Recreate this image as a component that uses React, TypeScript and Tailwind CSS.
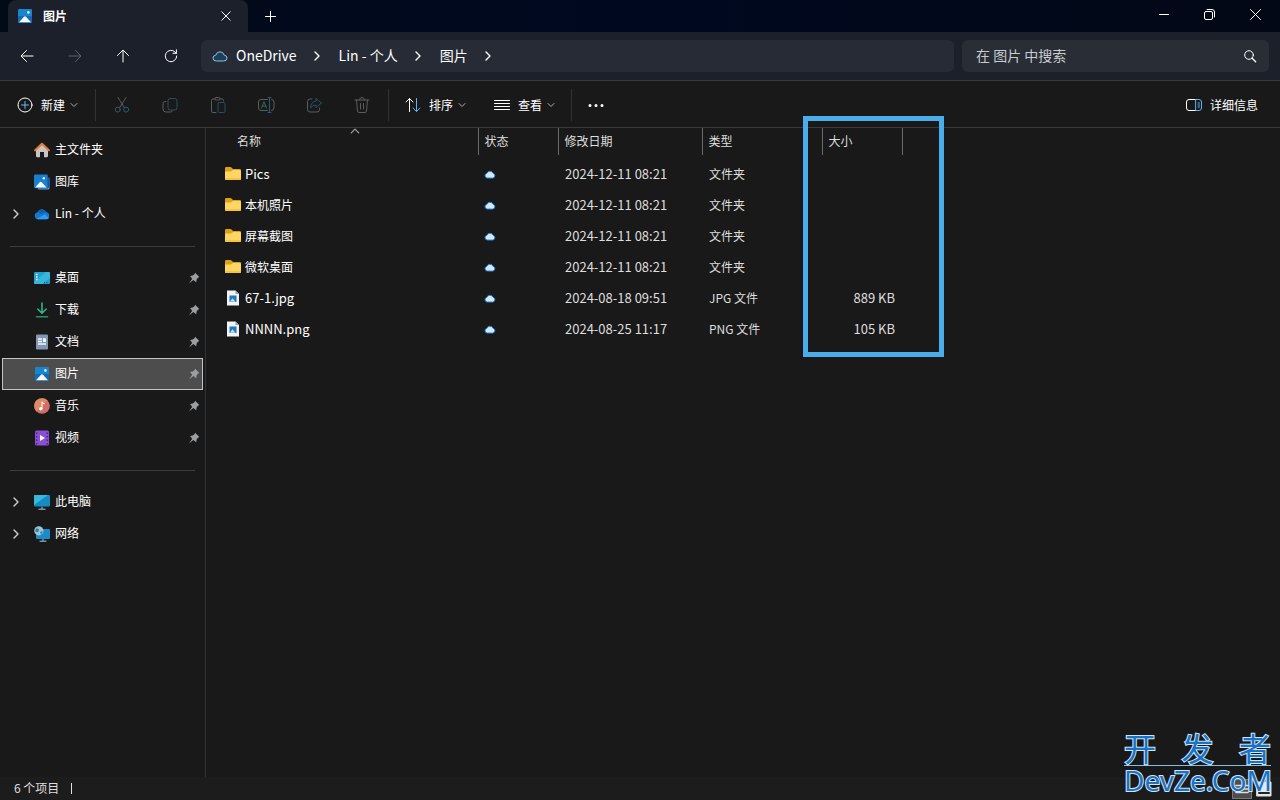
import { ReactNode } from "react";

type IconProps = { className?: string };

const Svg = ({
  children,
  className = "size-4",
  box = 16,
}: IconProps & { children: ReactNode; box?: number }) => (
  <svg
    viewBox={`0 0 ${box} ${box}`}
    className={`shrink-0 ${className}`}
    fill="none"
    stroke="currentColor"
    strokeLinecap="round"
    strokeLinejoin="round"
    aria-hidden="true"
  >
    {children}
  </svg>
);

const Chevron = ({ className = "size-2" }: IconProps) => (
  <Svg box={8} className={className}>
    <path d="M1 2.5 4 5.5 7 2.5" />
  </Svg>
);

const ChevronRight = ({ className = "size-4" }: IconProps) => (
  <Svg className={className}>
    <path d="M6 4l4 4-4 4" strokeWidth="1.4" />
  </Svg>
);

const PictureIcon = ({ className }: IconProps) => (
  <Svg className={className}>
    <rect x="1" y="1" width="14" height="14" rx="1.2" fill="#1b84cf" stroke="none" />
    <path d="M1 8h14v6q0 1-1 1H2q-1 0-1-1z" fill="#126bb5" stroke="none" />
    <path d="M2 14.2 7 8.8q1-1 2 0l5 5.4z" fill="#f3faff" stroke="none" />
    <circle cx="11.4" cy="4.4" r="1.3" fill="#d8f1ff" stroke="none" />
  </Svg>
);

const GalleryIcon = () => (
  <Svg>
    <path d="M4 14.2h9.5q1 0 1-1V4h1v10q0 1.5-1.5 1.5H4z" fill="#5d9fe0" stroke="none" />
    <path d="M14.5 3q1.2 0 1.2 1v9.5h-2z" fill="#1556a8" stroke="none" />
    <rect x="0" y="0.5" width="13.8" height="13.8" rx="1.2" fill="#1c7fcd" stroke="none" />
    <path d="M1.2 13.5 5.7 8.2q1-1 2 0l4.9 5.3z" fill="#f3faff" stroke="none" />
    <circle cx="9.8" cy="4.2" r="1.2" fill="#d8f1ff" stroke="none" />
  </Svg>
);

const HomeIcon = () => (
  <Svg>
    <path d="M2 7.5 8 2l6 5.5V14q0 1.3-1.3 1.3H10V10H6v5.3H3.3Q2 15.3 2 14z" fill="#c9c5c4" stroke="none" />
    <path d="M1.2 8.3 8 1.8l6.8 6.5" stroke="#e07c3c" strokeWidth="2.2" />
  </Svg>
);

const OneDriveIcon = () => (
  <Svg>
    <path d="M3.8 13.3a3.6 3.6 0 0 1-.5-7A5 5 0 0 1 12.3 6a3.8 3.8 0 0 1 .4 7.3z" fill="#1577cf" stroke="none" />
    <path d="M3.4 6.3A5 5 0 0 1 12.3 6q-3 .1-5 2.3Q5.8 6.5 3.4 6.3z" fill="#0f5fae" stroke="none" />
    <path d="M2.5 12.8 11 8.2l3.8 3.8q-.8 1.3-2.1 1.3H3.8z" fill="#2c9df0" stroke="none" />
  </Svg>
);

const DesktopIcon = () => (
  <Svg>
    <rect x="0" y="2" width="16" height="12" rx="1.3" fill="#249fd0" stroke="none" />
    <path d="M0 12 12 2h2.7q1.3 0 1.3 1.3V8L8 14H1.3Q0 14 0 12.7z" fill="#37b6dc" stroke="none" />
    <path d="M2 4.5h1.5M2 7h1.5M2 9.5h1.5" stroke="#e8fbff" strokeLinecap="butt" strokeWidth="1.3" />
    <path d="M10 12.6h1M12.5 12.6h1" stroke="#0c4d78" strokeLinecap="butt" />
  </Svg>
);

const DownloadIcon = () => (
  <Svg>
    <path d="M8 1v10M3.8 7 8 11.2 12.2 7" stroke="#2eb488" strokeWidth="1.6" />
    <path d="M2.5 14.7h11" stroke="#23936c" strokeWidth="1.6" />
  </Svg>
);

const DocumentIcon = () => (
  <Svg>
    <rect x="2" y="0.5" width="12" height="15" rx="1.2" fill="#8298b0" stroke="none" />
    <path d="M4 5h4M4 7.5h4M4 10h8" stroke="#f2f7fc" strokeLinecap="butt" strokeWidth="1.3" />
    <rect x="9" y="4.3" width="3" height="3.7" fill="#f2f7fc" stroke="none" />
  </Svg>
);

const MusicIcon = () => (
  <Svg>
    <circle cx="8" cy="8" r="7.8" fill="#cf6f68" stroke="none" />
    <path d="M.2 8A7.8 7.8 0 0 1 13.5 2.5L2.5 13.5A7.8 7.8 0 0 1 .2 8z" fill="#dd8a66" stroke="none" />
    <circle cx="6.8" cy="10.7" r="1.7" fill="#fff" stroke="none" />
    <path d="M8 10.7V3.8q.4 1.7 2.3 2" stroke="#fff" />
  </Svg>
);

const VideoIcon = () => (
  <Svg>
    <rect x="1" y="0.5" width="14" height="15" rx="1.5" fill="#8a4fd3" stroke="none" />
    <path d="M2.7 2.5v12M13.3 2.5v12" stroke="#4b2291" strokeDasharray="1.5 2" strokeLinecap="butt" strokeWidth="1.5" />
    <path d="M6 5v6l5-3z" fill="#fff" stroke="none" />
  </Svg>
);

const PcIcon = () => (
  <Svg>
    <rect x="0" y="1" width="16" height="11.5" rx="1" fill="#178bc4" stroke="none" />
    <path d="M0 11V2q0-1 1-1h13z" fill="#38b9dc" stroke="none" />
    <path d="M7 12.5h2V15H7z" fill="#2b7ea8" stroke="none" />
    <path d="M4.8 15.2h6.4" stroke="#b9c6cf" />
  </Svg>
);

const NetworkIcon = () => (
  <Svg>
    <rect x="2" y="3" width="14" height="10" rx="1" fill="#1b8bc9" stroke="none" />
    <path d="M8 13h2v2H8z" fill="#2b7ea8" stroke="none" />
    <path d="M6 15.2h6" stroke="#b9c6cf" />
    <circle cx="4.8" cy="4.8" r="4.6" fill="#9cc6d8" stroke="none" />
    <path d="M2 2.5q2.5-.5 3 1.2T3.5 6 1.2 5zM6 6l2.5-1q.3 2-1.5 3.4z" fill="#3a7c9c" stroke="none" />
  </Svg>
);

const PinIcon = () => (
  <Svg box={12} className="size-3 text-[#9b9fa3]">
    <path d="M7.2.8 11.3 4.9 9.9 5.7 8.6 7.5 8.2 10.2 5.3 7.9 1 11.4 4.2 6.8 2 4.1 4.7 3.6 6.4 2.2z" fill="currentColor" stroke="none" />
  </Svg>
);

const FolderIcon = () => (
  <Svg>
    <path d="M0 2.3Q0 1 1.3 1h4q.7 0 1.2.6L8 3H14.7Q16 3 16 4.3V6H0z" fill="#dba21c" stroke="none" />
    <path d="M0 5.5h6L8 4h6.7Q16 4 16 5.3v7.4q0 1.3-1.3 1.3H1.3Q0 14 0 12.7z" fill="#fdd663" stroke="none" />
    <path d="M0 12v.7Q0 14 1.3 14h13.4q1.3 0 1.3-1.3V12z" fill="#f5c344" stroke="none" />
  </Svg>
);

const ImageFileIcon = () => (
  <Svg>
    <path d="M2 .5h8.5L14 4v11.5H2z" fill="#f1f3f5" stroke="none" />
    <path d="M10.5.5V4H14z" fill="#9aa3ab" stroke="none" />
    <rect x="4.5" y="5.5" width="7" height="6.5" fill="#2178bd" stroke="none" />
    <path d="M4.8 11.7 7.5 8.3l3 3.4z" fill="#bfe2f7" stroke="none" />
  </Svg>
);

const CloudStatusIcon = () => (
  <Svg className="size-3" box={12}>
    <path d="M3 10a2.3 2.3 0 0 1-.3-4.5A3.5 3.5 0 0 1 9.2 5.4 2.4 2.4 0 0 1 9.1 10z" fill="#d6e8f7" stroke="#1f7fcc" />
  </Svg>
);

const CutIcon = () => (
  <Svg box={18} className="size-[18px]">
    <path d="M5 1.5 11.3 11.5M13 1.5 6.7 11.5" />
    <circle cx="4.8" cy="13.6" r="2.5" stroke="#2b5a74" />
    <circle cx="13.2" cy="13.6" r="2.5" stroke="#2b5a74" />
  </Svg>
);

const CopyIcon = () => (
  <Svg box={18} className="size-[18px]">
    <rect x="7" y="2.5" width="9" height="11.5" rx="2.2" stroke="#27516a" />
    <path d="M5 5.5H4Q2 5.5 2 7.5V13q0 3 3 3h4.5q1.5 0 2-1" />
  </Svg>
);

const PasteIcon = () => (
  <Svg box={18} className="size-[18px]">
    <path d="M6 3H4Q2.5 3 2.5 4.5v10.8Q2.5 16.5 4 16.5h3M11 3h2q1.5 0 1.5 1.5V5" />
    <rect x="6" y="1.5" width="5" height="2.5" rx="1.2" />
    <rect x="9" y="6.5" width="7" height="10" rx="1.2" stroke="#27516a" />
  </Svg>
);

const RenameIcon = () => (
  <Svg box={18} className="size-[18px]">
    <path d="M10.5 3.5H4q-2.5 0-2.5 2.5v6q0 2.5 2.5 2.5h6.5M14.5 3.5q2.5 0 2.5 2.5v6q0 2.5-2.5 2.5" />
    <path d="M12.5 1.5v15M11 1.5h3M11 16.5h3" stroke="#2b5a74" />
    <path d="M4.5 12 7 5.7 9.5 12M5.4 10h3.2" stroke="#2d6a62" />
  </Svg>
);

const ShareIcon = () => (
  <Svg box={18} className="size-[18px]">
    <path d="M7 3H5Q2.5 3 2.5 5.5v8Q2.5 16 5 16h7q2.5 0 2.5-2.5V12" />
    <path d="M11 2.5 16.5 7 11 11.5V9Q7.5 9 5.5 12 6 5.5 11 5z" stroke="#27516a" />
  </Svg>
);

const DeleteIcon = () => (
  <Svg box={18} className="size-[18px]">
    <path d="M2 4h14M6.5 4Q6.5 1.5 9 1.5T11.5 4M3.5 4l1 11q.2 1.5 1.5 1.5h6q1.3 0 1.5-1.5l1-11M7.5 7.5v5.5M10.5 7.5v5.5" />
  </Svg>
);

const disabledTools = [
  { label: "剪切", icon: <CutIcon /> },
  { label: "复制", icon: <CopyIcon /> },
  { label: "粘贴", icon: <PasteIcon /> },
  { label: "重命名", icon: <RenameIcon /> },
  { label: "共享", icon: <ShareIcon /> },
  { label: "删除", icon: <DeleteIcon /> },
];

type NavEntry = {
  label: string;
  icon: ReactNode;
  expandable?: boolean;
  pinned?: boolean;
  active?: boolean;
};

const navGroups: NavEntry[][] = [
  [
    { label: "主文件夹", icon: <HomeIcon /> },
    { label: "图库", icon: <GalleryIcon /> },
    { label: "Lin - 个人", icon: <OneDriveIcon />, expandable: true },
  ],
  [
    { label: "桌面", icon: <DesktopIcon />, pinned: true },
    { label: "下载", icon: <DownloadIcon />, pinned: true },
    { label: "文档", icon: <DocumentIcon />, pinned: true },
    { label: "图片", icon: <PictureIcon />, pinned: true, active: true },
    { label: "音乐", icon: <MusicIcon />, pinned: true },
    { label: "视频", icon: <VideoIcon />, pinned: true },
  ],
  [
    { label: "此电脑", icon: <PcIcon />, expandable: true },
    { label: "网络", icon: <NetworkIcon />, expandable: true },
  ],
];

const files = [
  { name: "Pics", date: "2024-12-11 08:21", type: "文件夹", size: "" },
  { name: "本机照片", date: "2024-12-11 08:21", type: "文件夹", size: "" },
  { name: "屏幕截图", date: "2024-12-11 08:21", type: "文件夹", size: "" },
  { name: "微软桌面", date: "2024-12-11 08:21", type: "文件夹", size: "" },
  { name: "67-1.jpg", date: "2024-08-18 09:51", type: "JPG 文件", size: "889 KB" },
  { name: "NNNN.png", date: "2024-08-25 11:17", type: "PNG 文件", size: "105 KB" },
];

const TitleBar = () => (
  <div className="flex h-8 items-stretch bg-linear-to-r from-[#020a18] via-[#000820] to-[#020815] pl-2">
    <div className="flex w-60 items-center rounded-t-lg bg-[#1b202a] pr-3 pl-[9px]">
      <PictureIcon />
      <span className="grow pl-[10px] text-xs font-bold">图片</span>
      <button aria-label="关闭标签页" className="flex size-5 items-center justify-center">
        <Svg box={10} className="size-[10px]">
          <path d="M.8.8 9.2 9.2M9.2.8.8 9.2" />
        </Svg>
      </button>
    </div>
    <button aria-label="新建标签页" className="flex w-11 items-center justify-center">
      <Svg box={11} className="size-[11px]">
        <path d="M5.5.5v10M.5 5.5h10" />
      </Svg>
    </button>
    <div className="ml-auto flex h-7">
      <button aria-label="最小化" className="flex w-11 items-center justify-center">
        <Svg box={10} className="size-[10px]">
          <path d="M0 5.5h10" />
        </Svg>
      </button>
      <button aria-label="还原" className="flex w-[46px] items-center justify-center">
        <Svg box={11} className="size-[11px]">
          <rect x=".5" y="2.5" width="8" height="8" rx="1.5" />
          <path d="M3 .5h5Q10.5.5 10.5 3v5" />
        </Svg>
      </button>
      <button aria-label="关闭" className="flex w-12 items-center justify-center pr-[2px]">
        <Svg box={11} className="size-[11px]">
          <path d="M.5.5l10 10M10.5.5l-10 10" />
        </Svg>
      </button>
    </div>
  </div>
);

const crumbs = ["OneDrive", "Lin - 个人", "图片"];

const AddressRow = () => (
  <div className="flex h-[49px] items-center border-b border-[#3a3a3a] bg-[#1b202a] pr-[11px]">
    <div className="flex w-[201px] shrink-0 gap-8 pl-[19px]">
      <button aria-label="后退">
        <Svg>
          <path d="M14 8H2.5M7.5 2.5 2 8l5.5 5.5" />
        </Svg>
      </button>
      <button aria-label="前进" disabled className="text-[#5f646c]">
        <Svg>
          <path d="M2 8h11.5M8.5 2.5 14 8l-5.5 5.5" />
        </Svg>
      </button>
      <button aria-label="向上">
        <Svg>
          <path d="M8 14V2.5M2.5 7.5 8 2l5.5 5.5" />
        </Svg>
      </button>
      <button aria-label="刷新">
        <Svg>
          <path d="M13.7 8A5.7 5.7 0 1 1 12 4l1.3 1.3M13.4 1.8v3.5H9.9" />
        </Svg>
      </button>
    </div>
    <nav aria-label="路径" className="flex h-8 grow items-center rounded-md bg-[#262b36] pl-[11px] text-sm leading-5">
      <Svg className="mr-2 size-4 text-[#8fbfe2]">
        <path d="M4 13a2.9 2.9 0 0 1-.2-5.8A4.3 4.3 0 0 1 12.2 7.2 2.9 2.9 0 0 1 12 13z" fill="#1c4059" />
      </Svg>
      {crumbs.map((crumb) => (
        <span key={crumb} className="flex items-center">
          <a href="#" className="pb-[2px]">{crumb}</a>
          <ChevronRight className="mr-[14px] ml-3 size-4" />
        </span>
      ))}
    </nav>
    <div className="ml-2 flex h-8 w-[307px] items-center rounded-md bg-[#282d36] pr-3">
      <input
        type="text"
        aria-label="在 图片 中搜索"
        placeholder="在 图片 中搜索"
        className="min-w-0 grow bg-transparent pb-[2px] pl-[14px] text-sm leading-5 outline-none placeholder:text-[#c9cbcf]"
      />
      <button aria-label="搜索">
        <Svg className="size-[14px]" box={14}>
          <circle cx="6" cy="6" r="4.3" />
          <path d="M9.2 9.2 12.7 12.7" strokeWidth="1.3" />
        </Svg>
      </button>
    </div>
  </div>
);

const Toolbar = () => (
  <div className="flex h-[47px] items-center border-b border-[#3a3a3a] pt-px pr-[22px] pl-4 text-xs leading-4">
    <button className="flex h-8 items-center">
      <Svg box={18} className="size-[18px]">
        <circle cx="9" cy="9" r="7" />
        <path d="M9 5.5v7M5.5 9h7" stroke="#6cb8ee" />
      </Svg>
      <span className="mr-[5px] ml-[7px]">新建</span>
      <Chevron className="size-2 text-[#b0b0b0]" />
    </button>
    <div className="ml-[17px] flex h-8 items-center gap-[30px] border-l border-[#333] pl-[17px] text-[#5c5c5c]">
      {disabledTools.map((tool) => (
        <button key={tool.label} aria-label={tool.label} disabled>
          {tool.icon}
        </button>
      ))}
    </div>
    <div className="ml-[17px] flex h-8 items-center border-x border-[#333] px-4">
      <button className="flex items-center">
        <Svg className="size-4">
          <path d="M4.5 14.5v-13M1 5l3.5-3.5L8 5" />
          <path d="M11.5 1.5v13M8 11l3.5 3.5L15 11" stroke="#5fb2ea" />
        </Svg>
        <span className="mr-[5px] ml-2">排序</span>
        <Chevron className="size-2 text-[#b0b0b0]" />
      </button>
      <button className="ml-7 flex items-center">
        <Svg className="size-4">
          <path d="M.5 3.5h15M.5 6.5h15M.5 9.5h15M.5 12.5h15" />
        </Svg>
        <span className="mr-[5px] ml-2">查看</span>
        <Chevron className="size-2 text-[#b0b0b0]" />
      </button>
    </div>
    <button aria-label="更多" className="ml-4">
      <Svg>
        <path d="M2 8.5h.01M8 8.5h.01M14 8.5h.01" strokeWidth="3" />
      </Svg>
    </button>
    <button className="ml-auto flex items-center gap-2">
      <Svg className="size-4">
        <path d="M10 2.5H3Q.5 2.5.5 5v6Q.5 13.5 3 13.5h7" />
        <path d="M10 2.5h3q2.5 0 2.5 2.5v6q0 2.5-2.5 2.5h-3zM12 6h1.5M12 8h1.5M12 10h1.5" stroke="#5fb2ea" />
      </Svg>
      <span>详细信息</span>
    </button>
  </div>
);

const Sidebar = () => (
  <nav aria-label="导航窗格" className="w-[206px] shrink-0 border-r border-[#333] pt-[6px] pr-[2px] pl-[2px] text-xs leading-4">
    {navGroups.map((group, index) => (
      <div key={index}>
        {index > 0 && (
          <div className="flex h-8 items-center px-2">
            <hr className="grow border-[#3d3d3d]" />
          </div>
        )}
        <ul>
          {group.map((item) => (
            <li key={item.label}>
              <a
                href="#"
                aria-current={item.active ? "page" : undefined}
                className={`flex h-8 items-center border pr-[2px] pl-[5px] ${
                  item.active ? "border-[#c4c4c4] bg-[#4d4d4d]" : "border-transparent"
                }`}
              >
                <span className="flex w-[26px] items-center text-[#d0d0d0]">
                  {item.expandable && <ChevronRight />}
                </span>
                {item.icon}
                <span className="grow pb-[2px] pl-[5px]">{item.label}</span>
                {item.pinned && <PinIcon />}
              </a>
            </li>
          ))}
        </ul>
      </div>
    ))}
  </nav>
);

const FileTable = () => (
  <table className="w-[696px] table-fixed text-left text-xs leading-4 text-[#dedede]">
    <colgroup>
      <col className="w-[272px]" />
      <col className="w-20" />
      <col className="w-36" />
      <col className="w-[120px]" />
      <col className="w-20" />
    </colgroup>
    <thead>
      <tr className="h-[27px] *:border-r *:border-[#6a6a6a] *:pt-0 *:pb-[2px] *:font-normal">
        <th aria-sort="ascending" className="relative pl-[31px]">
          名称
          <Chevron className="absolute -top-[2px] right-[118px] size-[10px] rotate-180 text-[#a0a0a0]" />
        </th>
        <th className="pl-[6px]">状态</th>
        <th className="pl-[6px]">修改日期</th>
        <th className="pl-[6px]">类型</th>
        <th className="pl-[6px]">大小</th>
      </tr>
    </thead>
    <tbody>
      <tr aria-hidden="true" className="h-1">
        <td colSpan={5} />
      </tr>
      {files.map((file) => (
        <tr key={file.name} className="h-[31px] *:pt-0 *:pb-[2px]">
          <td className="pl-[19px]">
            <span className="flex items-center gap-1 text-white">
              {file.size ? <ImageFileIcon /> : <FolderIcon />}
              <span className={file.name.match(/^\w/) ? "text-[13px]" : "text-xs"}>{file.name}</span>
            </span>
          </td>
          <td className="pl-[6px]">
            <CloudStatusIcon />
          </td>
          <td className="pl-[7px] text-[13px]">{file.date}</td>
          <td className="pl-[7px]">{file.type}</td>
          <td className="pr-[7px] text-right text-[13px]">{file.size}</td>
        </tr>
      ))}
    </tbody>
  </table>
);

const Watermark = () => (
  <div className="absolute right-[9px] bottom-[6px] w-[147px] whitespace-nowrap text-[#1a72c4] [paint-order:stroke_fill] [-webkit-text-stroke:2px_#cfe6fa]">
    <div className="flex justify-between border-b border-[#7cc0f0] pb-[2px] text-[32px] leading-8">
      <span>开</span>
      <span>发</span>
      <span>者</span>
    </div>
    <div className="font-['Noto_Sans',sans-serif] text-[28px] leading-7">DevZe.CoM</div>
  </div>
);

const StatusBar = () => (
  <footer className="relative flex h-[23px] items-center bg-[#1c1c1c] pr-[6px] pl-[14px] text-xs leading-4 text-[#dedede]">
    <span className="pb-px">6 个项目</span>
    <span className="ml-3 h-[11px] border-l border-[#e0e0e0]" />
    <div className="ml-auto flex items-center gap-[2px]">
      <button aria-label="详细信息视图" className="flex size-5 items-center justify-center border border-[#777] bg-[#4d4d4d]">
        <Svg className="size-[14px]">
          <path d="M1 4h14M1 8h14M1 12h14" strokeWidth="1.5" />
        </Svg>
      </button>
      <button aria-label="大图标视图" className="flex size-5 items-center justify-center">
        <Svg>
          <rect x="1" y="1" width="14" height="14" fill="#e8e8e8" />
          <path d="M3 12h10" stroke="#222" strokeWidth="2" />
        </Svg>
      </button>
    </div>
    <Watermark />
  </footer>
);

export default function App() {
  return (
    <div className="flex min-h-screen flex-col bg-[#191919] font-['Noto_Sans_CJK_SC',sans-serif] text-white">
      <header>
        <TitleBar />
        <AddressRow />
        <Toolbar />
      </header>
      <div className="flex grow">
        <Sidebar />
        <main className="relative grow">
          <FileTable />
          <div className="pointer-events-none absolute -top-3 left-[597px] h-[241px] w-[141px] border-[5px] border-[#4aaeea]" />
        </main>
      </div>
      <StatusBar />
    </div>
  );
}
